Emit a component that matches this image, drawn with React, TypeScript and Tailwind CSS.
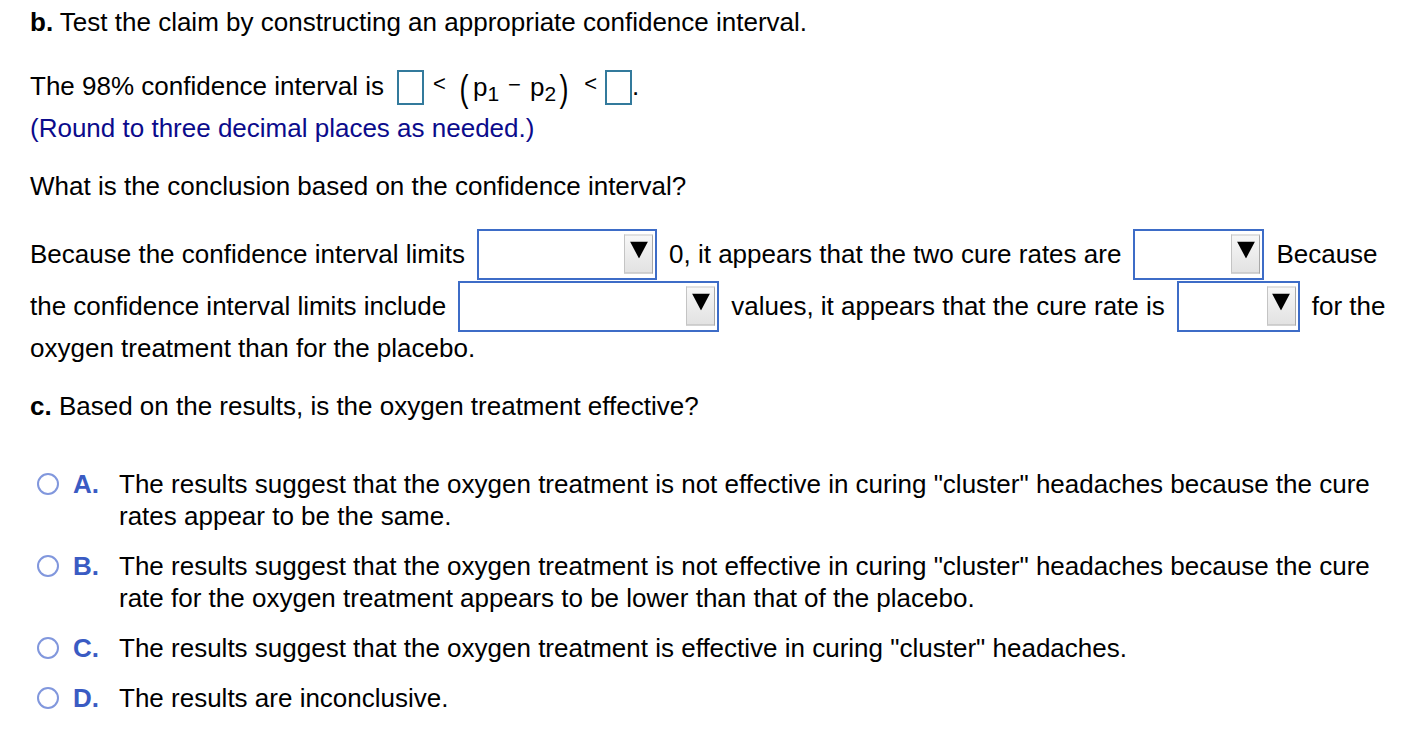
import React from 'react';

const Arrow: React.FC = () => (
  <div className="absolute right-[2px] top-1/2 -translate-y-1/2 w-[29px] h-[39px] border border-[#c4c4c4] border-b-[#a8a8a8] border-r-[#a8a8a8] bg-gradient-to-b from-[#f7f7f7] to-[#e2e2e2] flex justify-center pt-[6px]">
    <svg width="18" height="17" viewBox="0 0 18 17">
      <polygon points="0,0 18,0 9,17" fill="#000" />
    </svg>
  </div>
);

const Dropdown: React.FC<{ w: string }> = ({ w }) => (
  <div className={`relative h-[51px] border-2 border-[#3d6cc7] bg-white shrink-0 ${w}`}>
    <Arrow />
  </div>
);

const Box: React.FC = () => <span className="block w-[27px] h-[35px] border-2 border-[#337a9c] bg-white" />;

const options = [
  {
    key: 'A',
    text: 'The results suggest that the oxygen treatment is not effective in curing "cluster" headaches because the cure rates appear to be the same.',
  },
  {
    key: 'B',
    text: 'The results suggest that the oxygen treatment is not effective in curing "cluster" headaches because the cure rate for the oxygen treatment appears to be lower than that of the placebo.',
  },
  { key: 'C', text: 'The results suggest that the oxygen treatment is effective in curing "cluster" headaches.' },
  { key: 'D', text: 'The results are inconclusive.' },
];

const App: React.FC = () => {
  return (
    <div className="w-[1410px] h-[748px] bg-white text-black text-[26px] leading-[32px] px-[30px] pt-[6px] font-['Liberation_Sans',Arial,sans-serif]">
      <p>
        <span className="font-bold">b.</span> Test the claim by constructing an appropriate confidence interval.
      </p>

      <div className="mt-[28px] h-[40px] flex items-center whitespace-nowrap">
        <span>The 98% confidence interval is</span>
        <span className="ml-[13px] mt-[2px]"><Box /></span>
        <span className="ml-[9px] text-[22px] -mt-[4px]">&lt;</span>
        <span className="ml-[12px] flex items-center">
          <span className="text-[36px] font-light leading-[40px] scale-x-75 mt-[6px]">(</span>
          <span className="ml-[3px] mt-[4px]">
            p<span className="text-[21px] relative top-[5px]">1</span>
          </span>
          <span className="mx-[9px] text-[22px] -mt-[2px]">−</span>
          <span className="mt-[4px]">
            p<span className="text-[21px] relative top-[5px]">2</span>
          </span>
          <span className="ml-[2px] text-[36px] font-light leading-[40px] scale-x-75 mt-[6px]">)</span>
        </span>
        <span className="ml-[14px] text-[22px] -mt-[4px]">&lt;</span>
        <span className="ml-[8px] mt-[2px]"><Box /></span>
        <span>.</span>
      </div>

      <p className="mt-[6px] text-[#0b0b8c]">(Round to three decimal places as needed.)</p>

      <p className="mt-[26px]">What is the conclusion based on the confidence interval?</p>

      <div className="mt-[26px]">
        <div className="h-[52px] flex items-center gap-[12px] whitespace-nowrap">
          <span>Because the confidence interval limits</span>
          <Dropdown w="w-[180px]" />
          <span>0, it appears that the two cure rates are</span>
          <Dropdown w="w-[131px]" />
          <span>Because</span>
        </div>
        <div className="h-[52px] flex items-center gap-[12px] whitespace-nowrap">
          <span>the confidence interval limits include</span>
          <Dropdown w="w-[261px]" />
          <span>values, it appears that the cure rate is</span>
          <Dropdown w="w-[123px]" />
          <span>for the</span>
        </div>
        <p>oxygen treatment than for the placebo.</p>
      </div>

      <p className="mt-[26px]">
        <span className="font-bold">c.</span> Based on the results, is the oxygen treatment effective?
      </p>

      <div className="mt-[46px] flex flex-col gap-[18px]">
        {options.map((o) => (
          <div key={o.key} className="flex items-start">
            <span className="ml-[7px] mt-[5px] w-[22px] h-[22px] rounded-full border-2 border-[#8197dd] shrink-0" />
            <span className="ml-[14px] w-[46px] shrink-0 font-bold text-[#3a5bc3]">{o.key}.</span>
            <span className="max-w-[1260px]">{o.text}</span>
          </div>
        ))}
      </div>
    </div>
  );
};

export default App;
